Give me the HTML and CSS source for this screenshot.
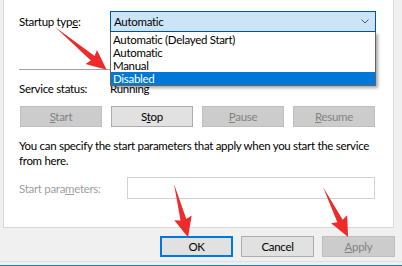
FILE: index.html
```html
<!DOCTYPE html>
<html lang="en">
<head>
  <meta charset="UTF-8">
  <title>Service Properties</title>
  <link rel="stylesheet" href="styles.css">
</head>
<body>
  <div class="panel">
    <!-- Startup type with open dropdown -->
    <div class="row">
      <span class="label">Startup typ<u>e</u>:</span>
      <div class="combo-wrap">
        <div class="combo">
          <span>Automatic</span>
          <svg class="chevron" width="8" height="5" viewBox="0 0 8 5">
            <polyline points="0.5,0.5 4,4 7.5,0.5" fill="none" stroke="#555" stroke-width="1"/>
          </svg>
        </div>
        <div class="list">
          <div>Automatic (Delayed Start)</div>
          <div>Automatic</div>
          <div>Manual</div>
          <div class="sel">Disabled</div>
        </div>
      </div>
    </div>

    <div class="sep"></div>

    <div class="row status">
      <span class="label">Service status:</span>
      <span>Running</span>
    </div>

    <div class="actions">
      <button class="btn" disabled><u>S</u>tart</button>
      <button class="btn">S<u>t</u>op</button>
      <button class="btn" disabled><u>P</u>ause</button>
      <button class="btn" disabled><u>R</u>esume</button>
    </div>

    <p class="hint">You can specify the start parameters that apply when you start the service from here.</p>

    <div class="row params">
      <span class="label dim">Start para<u>m</u>eters:</span>
      <input type="text" class="field" disabled>
    </div>
  </div>

  <div class="footer">
    <button class="btn default">OK</button>
    <button class="btn">Cancel</button>
    <button class="btn" disabled><u>A</u>pply</button>
  </div>

  <!-- red annotation arrows -->
  <svg class="arrows" width="402" height="266" viewBox="0 0 402 266">
    <g transform="translate(55,27) rotate(39.6)">
      <polygon points="0,0 49,-3 47,-9 67,0 47,9 49,3" />
    </g>
    <g transform="translate(174,184) rotate(75.2)">
      <polygon points="0,0 37,-3 35,-9 55,0 35,9 37,3" />
    </g>
    <g transform="translate(323,187) rotate(63.4)">
      <polygon points="0,0 38,-3 36,-9 56,0 36,9 38,3" />
    </g>
  </svg>
</body>
</html>
```

FILE: styles.css
```css
/* Service properties dialog, General tab */
body {
  margin: 0;
  width: 402px;
  height: 266px;
  background: #f0f0f0;
  font-family: Lato, "Liberation Sans", sans-serif;
  font-size: 11.5px;
  letter-spacing: -0.3px;
  color: #000;
  overflow: hidden;
  position: relative;
}

.panel {
  margin-left: 3px;
  width: 391px;
  height: 228px;
  box-sizing: border-box;
  background: #fff;
  border: 1px solid #d9d9d9;
  border-top: none;
  padding: 11px 17px 0 15px;
}

.row {
  display: flex;
  align-items: center;
}

.label {
  width: 91px;
  flex-shrink: 0;
}

u {
  text-underline-offset: 1px;
}

.combo-wrap {
  position: relative;
  flex: 1;
}

.combo {
  height: 21px;
  box-sizing: border-box;
  border: 1px solid #005499;
  background: #cce4f7;
  padding: 0 6px 0 3px;
  display: flex;
  align-items: center;
  justify-content: space-between;
}

.list {
  position: absolute;
  left: 0;
  right: 0;
  top: 21px;
  background: #fff;
  border: 1px solid #646464;
  border-top: none;
  padding-top: 1px;
  box-shadow: 2px 2px 3px rgba(0, 0, 0, 0.35);
  z-index: 2;
}

.list div {
  height: 13px;
  line-height: 13px;
  padding-left: 2px;
}

.list .sel {
  background: #0078d7;
  color: #fff;
}

.sep {
  height: 1px;
  background: #a0a0a0;
  margin-top: 37px;
}

.status {
  margin-top: 11px;
  line-height: 15px;
}

.actions {
  display: flex;
  gap: 9px;
  margin-top: 10px;
  padding-left: 1px;
}

.btn {
  width: 82px;
  height: 21px;
  padding: 0;
  font-family: inherit;
  font-size: inherit;
  letter-spacing: inherit;
  color: #000;
  background: #e1e1e1;
  border: 1px solid #adadad;
}

.btn:disabled {
  background: #cccccc;
  border-color: #bfbfbf;
  color: #838383;
}

.hint {
  margin: 11px 0 0;
  line-height: 15px;
}

.params {
  margin-top: 9px;
}

.params .label {
  width: 108px;
}

.dim {
  color: #a0a0a0;
}

.field {
  width: 248px;
  height: 22px;
  box-sizing: border-box;
  border: 1px solid #d3d3d3;
  background: #fff;
}

.footer {
  height: 38px;
  box-sizing: border-box;
  display: flex;
  justify-content: flex-end;
  gap: 8px;
  padding: 8px 7px 0 0;
  border-bottom: 1px solid #2b78c0;
  box-shadow: inset 0 -3px 0 #f0f0f0, inset 0 -4px 0 #cfe3f3;
}

.footer .btn {
  width: 73px;
}

.footer .default {
  border-color: #0078d7;
  box-shadow: inset 0 0 0 1px #0078d7;
}

.arrows {
  position: absolute;
  top: 0;
  left: 0;
  pointer-events: none;
  fill: #ee2a2a;
}
```
